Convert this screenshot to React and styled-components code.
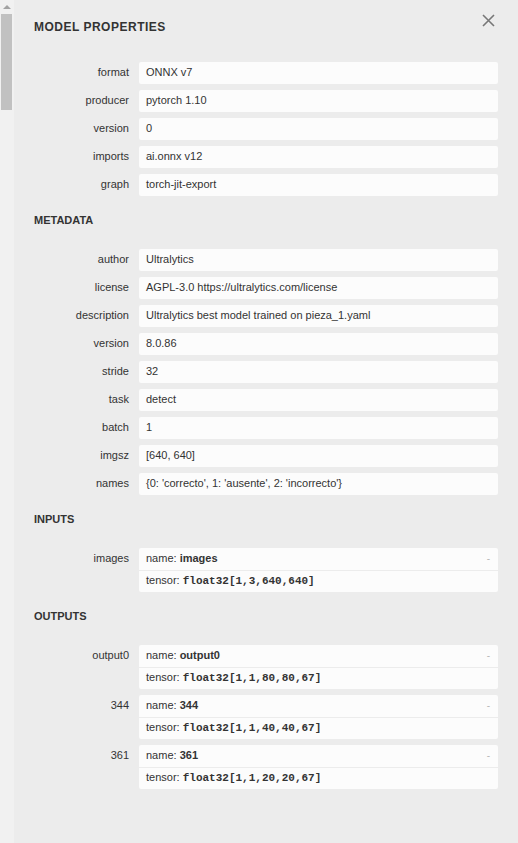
import React from "react";
import styled, { createGlobalStyle } from "styled-components";

const GlobalStyle = createGlobalStyle`
  html, body {
    margin: 0;
    padding: 0;
    background: #ececec;
    overflow: hidden;
  }
  body {
    font-family: "Liberation Sans", Arial, sans-serif;
    color: #333;
  }
`;

const Page = styled.div`
  display: flex;
  height: 100vh;
  width: 100%;
  overflow: hidden;
`;

const ScrollTrack = styled.div`
  position: relative;
  flex: 0 0 14px;
  width: 14px;
  background: #f1f1f1;
`;

const ScrollArrow = styled.div`
  position: absolute;
  top: 5px;
  left: 3px;
  width: 0;
  height: 0;
  border-left: 4px solid transparent;
  border-right: 4px solid transparent;
  border-bottom: 4px solid #a3a3a3;
`;

const ScrollThumb = styled.div`
  position: absolute;
  top: 14px;
  left: 1px;
  width: 11px;
  height: 96px;
  background: #c1c1c1;
`;

const Panel = styled.div`
  position: relative;
  flex: 1;
  padding: 21px 20px 0 20px;
  box-sizing: border-box;
`;

const Title = styled.div`
  font-weight: bold;
  font-size: 12px;
  line-height: 12px;
  letter-spacing: 0.5px;
  text-transform: uppercase;
  color: #333;
`;

const CloseButton = styled.button`
  position: absolute;
  top: 12px;
  right: 22px;
  width: 16px;
  height: 16px;
  padding: 0;
  border: none;
  background: transparent;
  cursor: pointer;
  display: flex;
  align-items: center;
  justify-content: center;
`;

const Header = styled.div`
  font-weight: bold;
  font-size: 11px;
  line-height: 13px;
  text-transform: uppercase;
  color: #333;
  margin: 18px 0 22px 0;
`;

const List = styled.div`
  display: flex;
  flex-direction: column;
  gap: 6px;
  margin-top: ${(p) => p.top || 0}px;
`;

const Row = styled.div`
  display: flex;
  align-items: flex-start;
`;

const Name = styled.div`
  flex: 0 0 95px;
  width: 95px;
  text-align: right;
  font-size: 11px;
  line-height: 21px;
  color: #333;
  margin-right: 10px;
  white-space: nowrap;
`;

const Value = styled.div`
  flex: 1;
  min-width: 0;
  background: #fcfcfc;
  border-radius: 2px;
  font-size: 11px;
  line-height: 21px;
  height: 22px;
  padding: 0 7px;
  white-space: nowrap;
  overflow: hidden;
`;

const ArgBox = styled.div`
  flex: 1;
  min-width: 0;
  background: #fcfcfc;
  border-radius: 2px;
  display: flex;
  flex-direction: column;
`;

const ArgLine = styled.div`
  position: relative;
  font-size: 11px;
  line-height: 21px;
  height: 22px;
  padding: 0 7px;
  white-space: nowrap;
  & + & {
    border-top: 1px solid #ececec;
    height: 21px;
    line-height: 19px;
  }
`;

const Strong = styled.b`
  font-weight: bold;
`;

const Code = styled.code`
  font-family: "Liberation Mono", "Courier New", monospace;
  font-weight: bold;
  font-size: 11px;
`;

const Toggle = styled.span`
  position: absolute;
  right: 8px;
  top: 0;
  font-size: 10px;
  color: #b8b8b8;
`;

const modelProps = [
  ["format", "ONNX v7"],
  ["producer", "pytorch 1.10"],
  ["version", "0"],
  ["imports", "ai.onnx v12"],
  ["graph", "torch-jit-export"],
];

const metadata = [
  ["author", "Ultralytics"],
  ["license", "AGPL-3.0 https://ultralytics.com/license"],
  ["description", "Ultralytics best model trained on pieza_1.yaml"],
  ["version", "8.0.86"],
  ["stride", "32"],
  ["task", "detect"],
  ["batch", "1"],
  ["imgsz", "[640, 640]"],
  ["names", "{0: 'correcto', 1: 'ausente', 2: 'incorrecto'}"],
];

const inputs = [["images", "images", "float32[1,3,640,640]"]];

const outputs = [
  ["output0", "output0", "float32[1,1,80,80,67]"],
  ["344", "344", "float32[1,1,40,40,67]"],
  ["361", "361", "float32[1,1,20,20,67]"],
];

const PropList = ({ items, top }) => (
  <List top={top}>
    {items.map(([k, v], i) => (
      <Row key={i}>
        <Name>{k}</Name>
        <Value>{v}</Value>
      </Row>
    ))}
  </List>
);

const ArgList = ({ items }) => (
  <List>
    {items.map(([k, name, type]) => (
      <Row key={k}>
        <Name>{k}</Name>
        <ArgBox>
          <ArgLine>
            name: <Strong>{name}</Strong>
            <Toggle>-</Toggle>
          </ArgLine>
          <ArgLine>
            tensor: <Code>{type}</Code>
          </ArgLine>
        </ArgBox>
      </Row>
    ))}
  </List>
);

const App = () => {
  return (
    <Page>
      <GlobalStyle />
      <ScrollTrack>
        <ScrollArrow />
        <ScrollThumb />
      </ScrollTrack>
      <Panel>
        <Title>Model Properties</Title>
        <CloseButton aria-label="close">
          <svg width="13" height="13" viewBox="0 0 13 13">
            <path d="M1 1 L12 12 M12 1 L1 12" stroke="#777" strokeWidth="1.6" fill="none" />
          </svg>
        </CloseButton>
        <PropList items={modelProps} top={29} />
        <Header>Metadata</Header>
        <PropList items={metadata} />
        <Header>Inputs</Header>
        <ArgList items={inputs} />
        <Header>Outputs</Header>
        <ArgList items={outputs} />
      </Panel>
    </Page>
  );
};

export default App;
